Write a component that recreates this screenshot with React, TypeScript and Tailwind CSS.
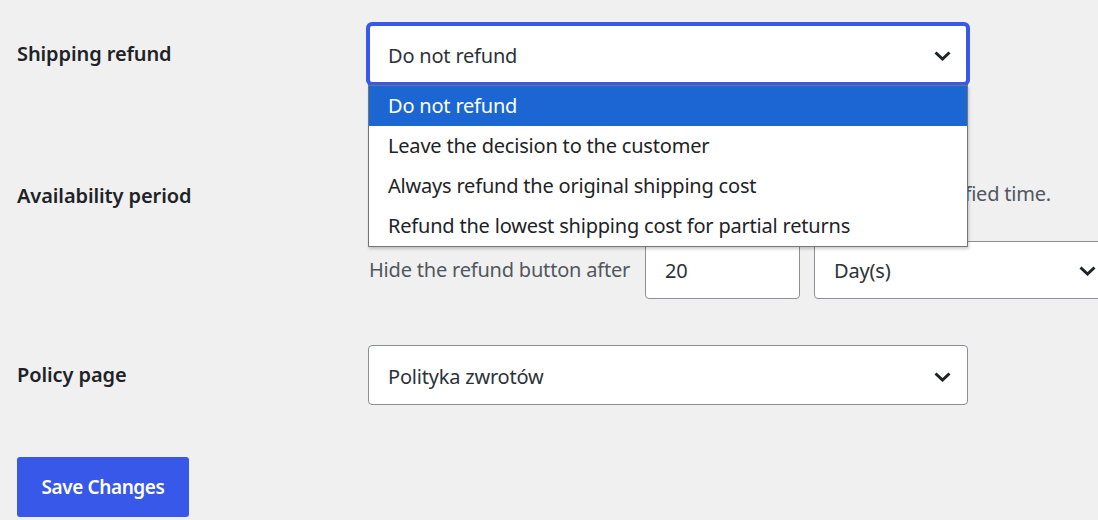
import type { ReactNode } from 'react';

const font = { fontFamily: '"Noto Sans", "Open Sans", sans-serif' };

function Chevron() {
  return (
    <svg width="17" height="10" viewBox="0 0 17 10" className="shrink-0">
      <path d="M1.5 1.5 L8.5 8 L15.5 1.5" fill="none" stroke="#1d2327" strokeWidth="3" />
    </svg>
  );
}

function Row({ label, children, className }: { label: string; children: ReactNode; className?: string }) {
  return (
    <div className={`flex ${className ?? ''}`}>
      <div className="w-[351px] shrink-0 text-[20px] font-semibold text-[#1d2327] tracking-[-0.1px]">{label}</div>
      <div className="flex-1 min-w-0">{children}</div>
    </div>
  );
}

const options = [
  'Do not refund',
  'Leave the decision to the customer',
  'Always refund the original shipping cost',
  'Refund the lowest shipping cost for partial returns',
];

export default function App() {
  return (
    <div className="w-[1098px] h-[520px] overflow-hidden bg-[#f0f0f0] pl-[17px] tracking-[-0.2px]" style={font}>
      {/* Shipping refund */}
      <Row label="Shipping refund" className="pt-[24px] items-center relative z-10">
        <div className="relative w-[600px]">
          <div className="h-[60px] bg-white border-2 border-[#3858e9] rounded-[4px] shadow-[0_0_0_2px_#3858e9] flex items-center justify-between pl-[18px] pr-[15px] pt-[3px] text-[20px] text-[#2c3338]">
            <span>Do not refund</span>
            <Chevron />
          </div>
          <ul className="absolute left-0 top-[61px] w-[600px] bg-white border border-[#767676] shadow-[1px_2px_3px_rgba(0,0,0,0.2)] text-[20px] text-[#1d2327]">
            {options.map((o, i) => (
              <li
                key={o}
                className={`h-[40px] flex items-center px-[19px] ${i === 0 ? 'bg-[#1b66d3] text-white' : ''}`}
              >
                {o}
              </li>
            ))}
          </ul>
        </div>
      </Row>

      {/* Availability period */}
      <Row label="Availability period" className="mt-[97px]">
        <div className="pl-[1px]">
          <p className="w-[682px] text-right text-[20px] leading-[28px] text-[#50575e] whitespace-nowrap -mt-[1px]">
            Allow customers to request a refund only within the specified time.
          </p>
          <div className="flex items-center mt-[33px]">
            <span className="shrink-0 text-[20px] text-[#50575e] whitespace-nowrap">Hide the refund button after</span>
            <div className="shrink-0 ml-[15px] w-[155px] h-[58px] bg-white border border-[#8c8f94] rounded-[4px] flex items-center px-[19px] pt-[2px] text-[20px] text-[#2c3338]">
              20
            </div>
            <div className="shrink-0 ml-[14px] w-[300px] h-[58px] bg-white border border-[#8c8f94] rounded-[4px] flex items-center justify-between pl-[19px] pr-[17px] pt-[2px] text-[20px] text-[#2c3338]">
              <span>Day(s)</span>
              <Chevron />
            </div>
          </div>
        </div>
      </Row>

      {/* Policy page */}
      <Row label="Policy page" className="mt-[46px] items-center">
        <div className="w-[600px] h-[60px] bg-white border border-[#8c8f94] rounded-[4px] flex items-center justify-between pl-[19px] pr-[16px] pt-[3px] text-[20px] text-[#2c3338]">
          <span>Polityka zwrotów</span>
          <Chevron />
        </div>
      </Row>

      <button className="mt-[52px] w-[172px] h-[60px] rounded-[3px] bg-[#3858e9] text-white text-[19px] font-semibold tracking-[-0.4px]">
        Save Changes
      </button>
    </div>
  );
}
